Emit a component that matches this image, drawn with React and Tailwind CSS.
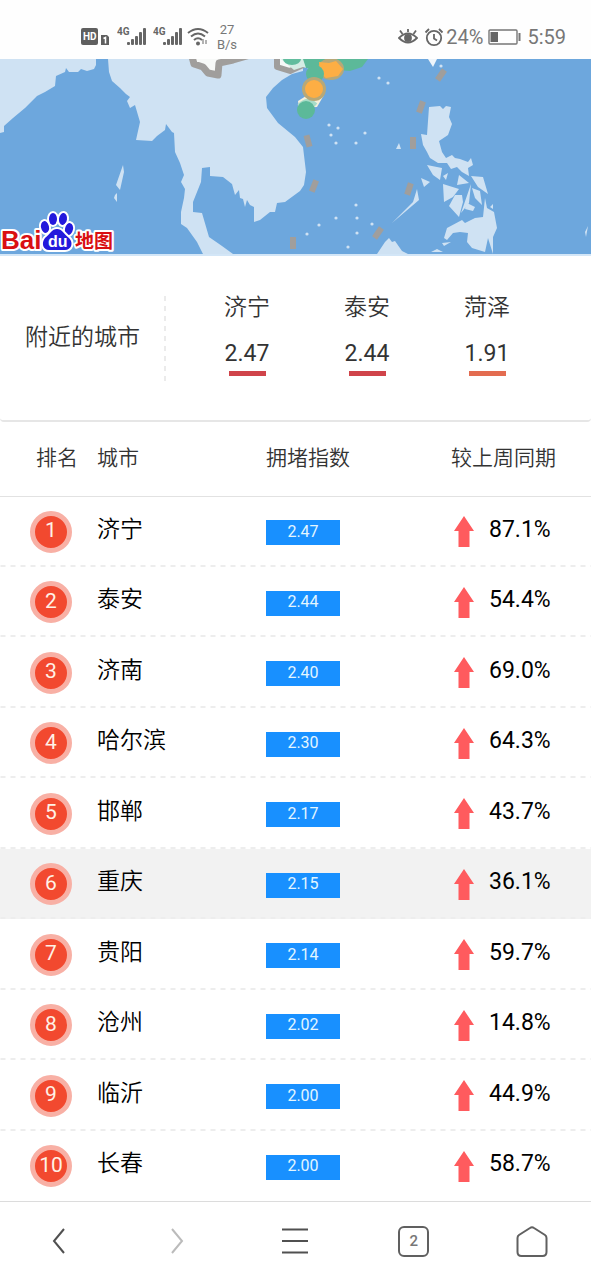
import React from 'react'

const nearbyCities = [
  { name: '济宁', value: '2.47', bar: 'bg-[#d0444a]' },
  { name: '泰安', value: '2.44', bar: 'bg-[#d0444a]' },
  { name: '菏泽', value: '1.91', bar: 'bg-[#e36c50]' },
]

const ranking = [
  { city: '济宁', index: '2.47', change: '87.1%' },
  { city: '泰安', index: '2.44', change: '54.4%' },
  { city: '济南', index: '2.40', change: '69.0%' },
  { city: '哈尔滨', index: '2.30', change: '64.3%' },
  { city: '邯郸', index: '2.17', change: '43.7%' },
  { city: '重庆', index: '2.15', change: '36.1%', active: true },
  { city: '贵阳', index: '2.14', change: '59.7%' },
  { city: '沧州', index: '2.02', change: '14.8%' },
  { city: '临沂', index: '2.00', change: '44.9%' },
  { city: '长春', index: '2.00', change: '58.7%' },
]

// x, y and tilt of each boundary dash on the sea
const seaDashes = [
  [308, 82, -15],
  [314, 127, 22],
  [293, 184, 0],
  [441, 16, 35],
  [421, 48, 20],
  [413, 84, 0],
  [409, 130, 18],
  [378, 174, 35],
]

const islets = [
  [329, 66], [338, 69], [331, 76], [336, 84], [356, 84], [365, 74],
  [379, 19], [388, 24], [356, 146], [336, 159], [357, 159], [319, 166],
  [307, 175], [357, 174], [348, 188], [372, 165], [441, 7],
]

function SignalIcon() {
  return (
    <svg className="h-[22px] w-[30px]" viewBox="0 0 30 22" fill="#666">
      <text x="0" y="9" fontSize="10" fontWeight="700" fontFamily="Roboto, sans-serif">4G</text>
      <rect x="10" y="16" width="3" height="3" rx="1" />
      <rect x="14" y="13" width="3" height="6" rx="1" />
      <rect x="18" y="10" width="3" height="9" rx="1" />
      <rect x="22" y="6" width="3" height="13" rx="1" />
      <rect x="26" y="2" width="3" height="17" rx="1" />
    </svg>
  )
}

function StatusBar() {
  return (
    <header className="flex h-[59px] items-center justify-between bg-[#fefefe] pt-[14px] pr-[25px] pl-[81px] text-[#777]">
      <div className="flex items-center">
        <svg className="h-5 w-[30px]" viewBox="0 0 30 20">
          <rect x="0" y="1" width="17" height="17" rx="2" fill="#5f5f5f" />
          <text x="2" y="13" fontSize="10" fontWeight="700" fill="#fff" fontFamily="Roboto, sans-serif">HD</text>
          <path d="M20 8h6l2 2v8h-8z" fill="#5f5f5f" />
          <path d="M22.500 11.500l2-1v6" fill="none" stroke="#fff" strokeWidth="1.500" />
        </svg>
        <div className="ml-[6px] flex gap-[6px]">
          <SignalIcon />
          <SignalIcon />
        </div>
        <svg className="ml-1 h-[22px] w-[22px]" viewBox="0 0 22 22" fill="none" stroke="#666" strokeWidth="2">
          <path d="M1 7q10-8 20 0M4 10.500q7-6 14 0M7 14q4-3.500 8 0" />
          <circle cx="11" cy="17.500" r="1" />
          <path d="M16 13v5m3 0v-4" strokeWidth="1" />
        </svg>
        <div className="ml-[6px] w-6 text-center text-[13px] leading-[15px]">
          <p>27</p>
          <p>B/s</p>
        </div>
      </div>

      <div className="flex items-center text-[20px] leading-6">
        <svg className="h-5 w-5" viewBox="0 0 20 20" fill="none" stroke="#666" strokeWidth="1.800">
          <path d="M1 11q9-9 18 0q-9 9-18 0zM10 5V2M4.500 7L2 3.500M15.500 7L18 3.500" />
          <circle cx="10" cy="11" r="3" fill="#666" />
        </svg>
        <svg className="ml-[6px] h-5 w-5" viewBox="0 0 20 20" fill="none" stroke="#666" strokeWidth="1.800">
          <circle cx="10" cy="11" r="7.200" />
          <path d="M10 7v4.500l3 2M1.500 5.500L5 2M18.500 5.500L15 2" />
        </svg>
        <span className="ml-[2px]">24%</span>
        <svg className="ml-[5px] h-5 w-[33px]" viewBox="0 0 33 20">
          <rect x="1" y="3" width="28" height="14" rx="1" fill="none" stroke="#777" strokeWidth="1.400" />
          <rect x="2.500" y="5" width="7.500" height="10" fill="#666" />
          <rect x="30.500" y="6" width="2" height="8" fill="#777" />
        </svg>
        <span className="ml-[6px]">5:59</span>
      </div>
    </header>
  )
}

function CongestionMap() {
  return (
    <section aria-label="拥堵地图" className="border-b-2 border-[#d3e6f7]">
      <svg
        className="block h-[195px] w-full"
        viewBox="0 0 591 195"
        preserveAspectRatio="xMinYMin slice"
      >
        <rect width="591" height="195" fill="#6da7dd" />

        {/* Land */}
        <g fill="#cfe2f3">
          <path d="M0 0V74L4 73V67L13 59L25 49L37 37L45 33L55 27L56 17L65 13L66 9L69 13L78 13L81 10L87 12L94 10L96 6V0Z" />
          <path d="M108 0L109 13L112 22L120 29L126 35L130 38L127 42L130 49L135 46L140 63L136 81L152 82L157 77L165 71L166 65L172 73L174 74L175 93L180 104L184 116L181 123L185 130L184 139L181 153V165L187 169L197 183L203 195H233L222 187L209 178L202 154L193 153V143L201 123L202 109L210 108V117L223 118L232 125L235 136L239 131L240 139L243 140L245 148L247 141L250 146L254 148V163L260 161L270 153H275L277 144L285 143L300 132L304 126L306 113L303 88L295 78L278 64L267 49L266 38L273 29L282 21L292 15L303 12V0Z" />
          <path d="M429 48L440 47L443 50L446 47L451 48L449 58L452 65L448 76L439 82L442 93L446 99L452 96L455 99L460 100L468 103L471 99L473 106L468 109L469 117L462 113L457 108L451 110L447 104L438 104L430 99L427 93L423 86L421 75L427 76Z" />
          <path d="M427 106L442 109L440 121L433 116ZM421 119L430 123L424 128ZM443 125L459 130L453 138L444 143ZM459 116L469 124L457 126ZM471 117L483 118L488 135L478 128ZM455 136L462 136L463 143L459 158L449 147ZM471 125L469 144L461 154ZM472 129L480 132L482 146L475 139ZM467 144L475 148L473 152L465 150ZM443 117L448 114L446 121Z" />
          <path d="M485 139L487 149L494 153L497 169L493 178V195L488 179L485 193L472 189L467 183L468 174L460 173L453 174L447 181L444 179L447 169L462 161L465 164L475 159L483 158ZM490 148L493 145V150ZM442 184L451 183L444 187ZM431 193L437 190L443 193Z" />
          <path d="M417 130L419 141L392 164L413 143ZM377 195L385 183L389 179L392 183L395 182L402 192L408 195Z" />
          <path d="M123 106L124 113L120 131L116 126ZM115 136L117 134V143L114 139ZM588 167L586 178L585 173Z" />
          {islets.map(([x, y]) => (
            <circle key={`${x}-${y}`} cx={x} cy={y} r="1.600" />
          ))}
          <path d="M399 84L401 90H396Z" />
        </g>

        {/* National boundary */}
        <g fill="#f7f9f8" stroke="#a09e9c" strokeWidth="7" strokeLinejoin="round">
          <path d="M191 -6L194 5L203 8L208 14L218 16L219 4L233 1L250 -4Z" />
          <path d="M277 -6V8L290 12L303 6L315 -6Z" strokeWidth="6" />
        </g>
        <g fill="#a09e9c">
          {seaDashes.map(([x, y, tilt]) => (
            <rect
              key={`${x}-${y}`}
              x={x - 3}
              y={y - 6}
              width="6"
              height="12"
              transform={`rotate(${tilt} ${x} ${y})`}
            />
          ))}
        </g>
        <path d="M428 0H437L433 8Z" fill="#eef5fb" />

        {/* City congestion markers */}
        <path d="M281 0H330L318 12L303 8L294 11Z" fill="#d5ede5" />
        <ellipse cx="292" cy="0" rx="9" ry="6" fill="#62bd9e" />
        <path d="M303 0H368L362 8L350 12L338 11L320 10L306 9Z" fill="#5cb999" />
        <path d="M298 42L306 37L324 36L317 48L299 49Z" fill="#f4f0dc" />
        <path d="M299 47Q307 38 316 46" fill="none" stroke="#a7dcc8" strokeWidth="4" />
        <ellipse cx="331" cy="10" rx="13" ry="11" fill="#b7a878" />
        <path d="M319 3L329 4L336 2L343 10L338 17L326 19L320 14Z" fill="#fdae44" />
        <circle cx="315" cy="15" r="9" fill="#5cb999" />
        <circle cx="314" cy="30" r="12" fill="#b7a878" />
        <circle cx="314" cy="30" r="9" fill="#fdae44" />
        <circle cx="306" cy="51" r="9" fill="#5cb999" />

        {/* Baidu logo */}
        <g
          stroke="#fff"
          strokeWidth="4"
          strokeLinejoin="round"
          paintOrder="stroke"
          fontWeight="700"
          fontFamily="'Liberation Sans', 'Noto Sans CJK SC', sans-serif"
        >
          <text x="1" y="190" fontSize="26" fill="#d90f12">Bai</text>
          <text x="75" y="189" fontSize="19" fill="#d90f12">地图</text>
          <g fill="#2319dc">
            <ellipse cx="45" cy="168" rx="4" ry="6" transform="rotate(-12 45 168)" />
            <ellipse cx="53" cy="160" rx="4" ry="6" />
            <ellipse cx="63" cy="160" rx="4" ry="6" transform="rotate(8 63 160)" />
            <ellipse cx="69" cy="170" rx="4" ry="6" transform="rotate(12 69 170)" />
            <path d="M57 170C62 170 64 175 69 179C74 184 71 191 65 191H49C43 191 41 184 45 179C50 175 52 170 57 170Z" />
          </g>
          <text x="48" y="188" fontSize="16" fill="#fff" stroke="none">du</text>
        </g>
      </svg>
    </section>
  )
}

function NearbyCities() {
  return (
    <section className="flex h-[166px] items-center rounded-b-[4px] border-b-2 border-[#e6e6e6] text-[23px] text-[#333]">
      <h2 className="w-[164px] pl-[25px] font-[350]">附近的城市</h2>
      <div className="h-[85px] w-[2px] bg-[linear-gradient(to_bottom,#ebebeb_50%,transparent_50%)] bg-[length:2px_10px]" />
      <ul className="mr-11 ml-[21px] grid flex-1 grid-cols-3 pb-[6px]">
        {nearbyCities.map(({ name, value, bar }) => (
          <li key={name} className="flex flex-col items-center leading-[26px]">
            <span className="font-[350]">{name}</span>
            <span className="mt-5">{value}</span>
            <span className={`mt-1 h-[5px] w-[37px] ${bar}`} />
          </li>
        ))}
      </ul>
    </section>
  )
}

function UpArrow() {
  return (
    <svg className="h-[31px] w-5" viewBox="0 0 20 31" fill="#ff5b5e">
      <path d="M10 0L20 15H15.500V31H4.500V15H0Z" />
    </svg>
  )
}

function RankingTable() {
  return (
    <table className="w-full table-fixed border-collapse text-left">
      <thead>
        <tr className="h-[74px] border-b border-[#e2e2e2] text-[21px] text-[#333]">
          <th className="w-[97px] pl-9 font-[350]">排名</th>
          <th className="w-[169px] font-[350]">城市</th>
          <th className="w-[185px] font-[350]">拥堵指数</th>
          <th className="font-[350]">较上周同期</th>
        </tr>
      </thead>
      <tbody>
        {ranking.map(({ city, index, change, active }, i) => (
          <tr
            key={city}
            className={`h-[71px] bg-[linear-gradient(to_right,#ededed_50%,transparent_50%)] bg-[length:10px_2px] bg-bottom bg-repeat-x text-[23px] leading-7 text-black last:bg-none even:h-[70px] ${active ? 'bg-[#f2f2f2]' : ''}`}
          >
            <td className="pl-[30px]">
              <span className="flex size-[42px] items-center justify-center rounded-full border-5 border-[#f8b0a5] bg-[#f2492f] pb-[3px] text-[21px] text-[#fff1e6]">
                {i + 1}
              </span>
            </td>
            <td className="pb-1 font-[350]">{city}</td>
            <td className="pt-[2px]">
              <span className="flex h-[25px] w-[74px] items-center justify-center bg-[#1890ff] pb-[2px] text-[16px] text-[#e3f6ff]">
                {index}
              </span>
            </td>
            <td>
              <span className="flex items-center gap-[15px] pl-[3px]">
                <UpArrow />
                <span className="pb-1">{change}</span>
              </span>
            </td>
          </tr>
        ))}
      </tbody>
    </table>
  )
}

function BottomNav() {
  return (
    <nav className="grid h-[79px] grid-cols-5 items-center justify-items-center border-t border-[#dcdcdc] bg-white text-[#505050]">
      <button type="button" aria-label="后退">
        <svg className="h-8 w-8" viewBox="0 0 32 32" fill="none" stroke="currentColor" strokeWidth="2">
          <path d="M21 4L11 16L21 28" />
        </svg>
      </button>
      <button type="button" aria-label="前进" className="text-[#bbb]">
        <svg className="h-8 w-8" viewBox="0 0 32 32" fill="none" stroke="currentColor" strokeWidth="2">
          <path d="M11 4L21 16L11 28" />
        </svg>
      </button>
      <button type="button" aria-label="菜单">
        <svg className="h-8 w-8" viewBox="0 0 32 32" fill="none" stroke="currentColor" strokeWidth="2">
          <path d="M3 4.500H29M3 16H29M3 27.500H29" />
        </svg>
      </button>
      <button
        type="button"
        aria-label="标签页"
        className="flex size-[31px] items-center justify-center rounded-[6px] border-2 border-[#606060] text-[15px] font-medium text-[#777]"
      >
        2
      </button>
      <button type="button" aria-label="主页">
        <svg className="h-8 w-8" viewBox="0 0 32 32" fill="none" stroke="#606060" strokeWidth="2" strokeLinejoin="round">
          <path d="M1.500 13Q1.500 11 3 10L14 3Q16 1.500 18 3L29 10Q30.500 11 30.500 13V27Q30.500 31 26.500 31H5.500Q1.500 31 1.500 27Z" />
        </svg>
      </button>
    </nav>
  )
}

export default function App() {
  return (
    <div className="flex min-h-screen flex-col bg-white font-[Roboto,'Noto_Sans_CJK_SC',sans-serif]">
      <StatusBar />
      <main className="flex-1">
        <CongestionMap />
        <NearbyCities />
        <RankingTable />
      </main>
      <BottomNav />
    </div>
  )
}
